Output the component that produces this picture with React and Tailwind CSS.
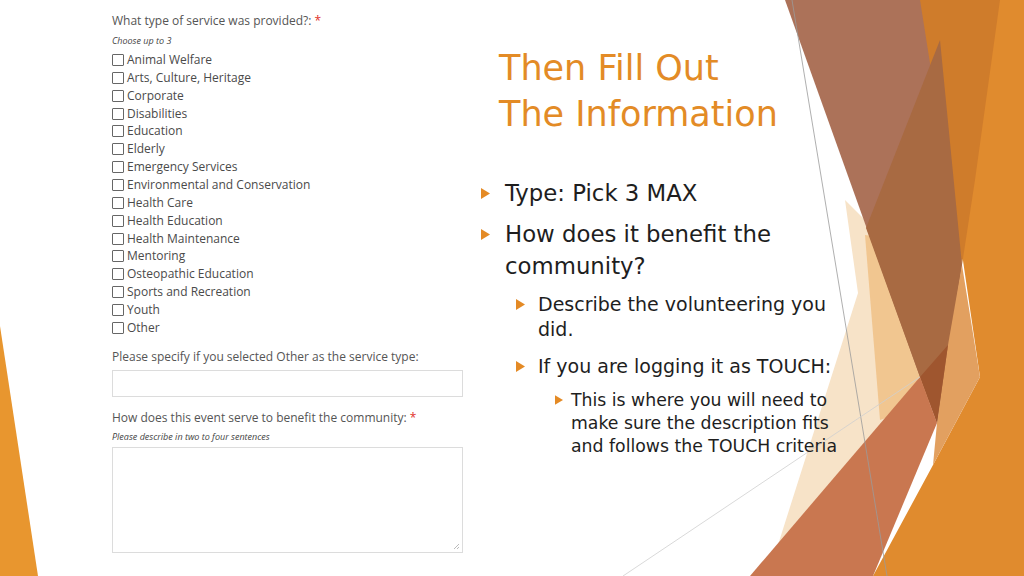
import React from "react";

const SERVICES = [
  "Animal Welfare",
  "Arts, Culture, Heritage",
  "Corporate",
  "Disabilities",
  "Education",
  "Elderly",
  "Emergency Services",
  "Environmental and Conservation",
  "Health Care",
  "Health Education",
  "Health Maintenance",
  "Mentoring",
  "Osteopathic Education",
  "Sports and Recreation",
  "Youth",
  "Other",
];

// facet-style shapes on the slide edges
function Decor() {
  return (
    <svg
      className="absolute inset-0 pointer-events-none"
      width="1024"
      height="576"
      viewBox="0 0 1024 576"
    >
      <polygon points="0,326 38,576 0,576" fill="#e8962f" />
      <polygon points="915,0 1024,0 1024,576 873,576 933,465 980,377 960,240" fill="#e08b2e" />
      <polygon points="918,0 1000,0 975,180 962,265" fill="#cf7c2b" />
      <polygon points="845,200 858,293 770,570 930,380 885,240" fill="#f7e3c8" />
      <polygon points="865,235 880,420 940,400 900,240" fill="#f1c690" />
      <polygon points="785,0 920,0 962,265 937,423 920,377" fill="#ac7259" />
      <polygon points="940,40 962,265 937,423 920,377 866,228" fill="#a86a42" />
      <polygon points="962,265 980,377 933,465 937,423 948,345" fill="#e2a060" />
      <polygon points="920,377 948,345 937,423" fill="#9f562f" />
      <polygon points="750,576 920,377 937,423 873,576" fill="#c97750" />
      <line x1="792" y1="0" x2="887" y2="576" stroke="#9a9a9a" strokeWidth="0.8" />
      <line x1="623" y1="576" x2="920" y2="377" stroke="#cfcfcf" strokeWidth="0.8" />
    </svg>
  );
}

function Arrow({ w, h }) {
  return (
    <svg width={w} height={h} viewBox="0 0 10 12" className="shrink-0">
      <polygon points="0,0 10,6 0,12" fill="#e48a25" />
    </svg>
  );
}

function ServiceForm() {
  return (
    <div className="w-[463px] pl-[112px] pt-[12px] font-['Open_Sans',sans-serif] text-[#555]">
      <p className="text-[12px] leading-[18px]">
        What type of service was provided?: <span className="text-[#e0302a]">*</span>
      </p>
      <p className="mt-[4px] text-[9px] leading-[14px] italic text-[#444]">Choose up to 3</p>
      <ul className="mt-[3px]">
        {SERVICES.map((s) => (
          <li key={s} className="flex items-center h-[17.87px] text-[12px] text-[#4a4a4a]">
            <span className="w-[12px] h-[12px] border border-[#666] rounded-[1px] mr-[3px] shrink-0" />
            {s}
          </li>
        ))}
      </ul>
      <p className="mt-[11px] text-[12px] leading-[18px]">
        Please specify if you selected Other as the service type:
      </p>
      <div className="mt-[4px] h-[27px] border border-[#dcdcdc] bg-white" />
      <p className="mt-[12px] text-[12px] leading-[18px]">
        How does this event serve to benefit the community: <span className="text-[#e0302a]">*</span>
      </p>
      <p className="mt-[3px] text-[9px] leading-[14px] italic text-[#444]">
        Please describe in two to four sentences
      </p>
      <div className="relative mt-[3px] h-[106px] border border-[#dcdcdc] bg-white">
        <svg className="absolute right-[2px] bottom-[2px]" width="7" height="7" viewBox="0 0 7 7">
          <line x1="6" y1="1" x2="1" y2="6" stroke="#aaa" strokeWidth="0.8" />
          <line x1="6" y1="4" x2="4" y2="6" stroke="#aaa" strokeWidth="0.8" />
        </svg>
      </div>
    </div>
  );
}

export default function App() {
  return (
    <div className="relative w-[1024px] h-[576px] overflow-hidden bg-white">
      <Decor />
      <div className="relative flex">
        <ServiceForm />
        <div className="pl-[18px] pt-[45px] font-['DejaVu_Sans',sans-serif] text-[#1e1e1e]">
          <h1 className="pl-[18px] text-[35px] leading-[46px] text-[#e38b26]">
            Then Fill Out
            <br />
            The Information
          </h1>
          <ul className="mt-[40px] flex flex-col gap-[9px] text-[22.8px] leading-[32px]">
            <li className="flex">
              <span className="w-[24px] h-[32px] flex items-center">
                <Arrow w={9} h={11} />
              </span>
              <span className="w-[300px]">Type: Pick 3 MAX</span>
            </li>
            <li className="flex">
              <span className="w-[24px] h-[32px] flex items-center">
                <Arrow w={9} h={11} />
              </span>
              <span className="w-[300px]">How does it benefit the community?</span>
            </li>
          </ul>
          <ul className="mt-[9.5px] pl-[35px] flex flex-col gap-[12px] text-[19px] leading-[25px]">
            <li className="flex">
              <span className="w-[22px] h-[25px] flex items-center">
                <Arrow w={9} h={11} />
              </span>
              <span className="w-[300px]">Describe the volunteering you did.</span>
            </li>
            <li className="flex">
              <span className="w-[22px] h-[25px] flex items-center">
                <Arrow w={9} h={11} />
              </span>
              <span className="w-[300px]">If you are logging it as TOUCH:</span>
            </li>
          </ul>
          <div className="mt-[10px] pl-[74px] flex text-[17.3px] leading-[23px]">
            <span className="w-[16px] h-[23px] flex items-center">
              <Arrow w={8} h={10} />
            </span>
            <span className="w-[274px]">
              This is where you will need to make sure the description fits and follows the TOUCH
              criteria
            </span>
          </div>
        </div>
      </div>
    </div>
  );
}
